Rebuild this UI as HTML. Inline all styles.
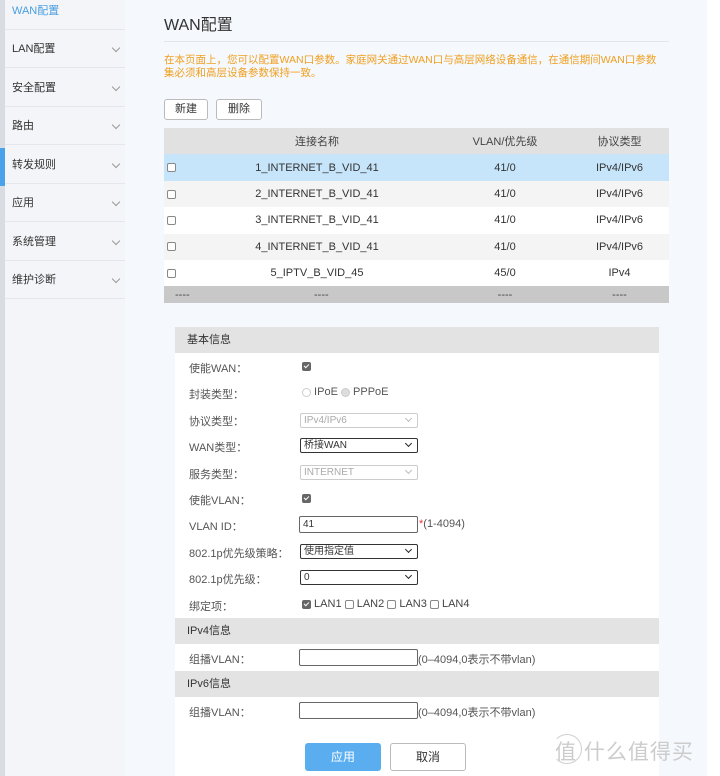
<!DOCTYPE html>
<html><head><meta charset="utf-8"><style>
*{margin:0;padding:0;box-sizing:border-box}
body{width:720px;height:776px;overflow:hidden;background:#fff;font-family:"Liberation Sans","Noto Sans CJK SC",sans-serif;font-size:11px;color:#333;position:relative}
.abs{position:absolute}
#side{left:0;top:0;width:125px;height:776px;background:#f3f5f8}
#strip{left:0;top:0;width:5px;height:776px;background:#d9dde3}
.si{position:absolute;left:5px;width:120px;height:38px;border-bottom:1px solid #e3e6ea;padding-left:7px;line-height:38px;font-size:11px;color:#333}
.si .ch{position:absolute;right:6px;top:15px;width:6px;height:6px;border-right:1px solid #999;border-bottom:1px solid #999;transform:rotate(45deg)}
#main{left:125px;top:0;width:582px;height:776px;background:#f5f8fc}
table{border-collapse:collapse;position:absolute;left:164px;top:128px;width:505px}
td{height:26.4px;text-align:center;font-size:11px}
td.c{width:16px;text-align:left;padding-left:3px}
td.p{padding-left:14px}
.cb{display:inline-block;width:9px;height:9px;border:1px solid #888;border-radius:2px;background:#fff;vertical-align:middle}
.cbk{display:inline-block;width:9px;height:9px;border-radius:2px;background:#666;vertical-align:middle;position:relative}
.cbk:after{content:"";position:absolute;left:3px;top:1px;width:2px;height:4px;border-right:1px solid #fff;border-bottom:1px solid #fff;transform:rotate(45deg)}
.btn{position:absolute;border:1px solid #bbb;border-radius:3px;background:#fff;text-align:center;font-size:11px}
#form{left:175px;top:327px;width:484px;height:449px;background:#fff}
.hd{position:absolute;left:175px;width:484px;height:26px;background:#e3e3e3;padding-left:12px;line-height:26px;font-size:11px}
.lb{position:absolute;left:189px;font-size:11px;color:#555}
.sel{position:absolute;left:300px;width:118px;height:15px;border:1px solid #333;border-radius:2px;background:#fff;font-size:10px;padding-left:3px;line-height:13px}
.sel.dis{border-color:#ccc;color:#aaa}
.sel:after{content:"";position:absolute;right:6px;top:2px;width:4px;height:4px;border-right:1.5px solid #222;border-bottom:1.5px solid #222;transform:rotate(45deg)}
.sel.dis:after{border-color:#bbb}
.inp{position:absolute;left:299px;width:119px;height:17px;border:1px solid #666;border-radius:2px;background:#fff;font-size:10px;padding-left:3px;line-height:15px}
</style></head><body>
<div id="side" class="abs"></div>
<div id="strip" class="abs"></div>
<div class="abs" style="left:0;top:148px;width:5px;height:38px;background:#4aa3ea"></div>
<div class="si" style="top:-8px;color:#4a9de0">WAN配置</div>
<div class="si" style="top:30px">LAN配置<span class="ch"></span></div>
<div class="si" style="top:69px">安全配置<span class="ch"></span></div>
<div class="si" style="top:107px">路由<span class="ch"></span></div>
<div class="si" style="top:146px">转发规则<span class="ch"></span></div>
<div class="si" style="top:184px">应用<span class="ch"></span></div>
<div class="si" style="top:223px">系统管理<span class="ch"></span></div>
<div class="si" style="top:261px">维护诊断<span class="ch"></span></div>
<div id="main" class="abs"></div>
<div class="abs" style="left:164px;top:11px;font-size:16px;color:#333">WAN配置</div>
<div class="abs" style="left:164px;top:41px;width:505px;height:1px;background:#e3e6ea"></div>
<div class="abs" style="left:164px;top:54px;width:500px;font-size:10.5px;line-height:13px;color:#f0a020">在本页面上，您可以配置WAN口参数。家庭网关通过WAN口与高层网络设备通信，在通信期间WAN口参数<br>集必须和高层设备参数保持一致。</div>
<div class="btn" style="left:164px;top:99px;width:44px;height:21px;line-height:19px">新建</div>
<div class="btn" style="left:216px;top:99px;width:46px;height:21px;line-height:19px">删除</div>
<table>
<tr style="background:#e1e1e1;color:#444"><td class="c"></td><td style="width:274px">连接名称</td><td style="width:102px">VLAN/优先级</td><td class="p">协议类型</td></tr>
<tr style="background:#c6e5fa"><td class="c"><span class="cb"></span></td><td>1_INTERNET_B_VID_41</td><td>41/0</td><td class="p">IPv4/IPv6</td></tr>
<tr style="background:#f4f4f4"><td class="c"><span class="cb"></span></td><td>2_INTERNET_B_VID_41</td><td>41/0</td><td class="p">IPv4/IPv6</td></tr>
<tr style="background:#fff"><td class="c"><span class="cb"></span></td><td>3_INTERNET_B_VID_41</td><td>41/0</td><td class="p">IPv4/IPv6</td></tr>
<tr style="background:#f4f4f4"><td class="c"><span class="cb"></span></td><td>4_INTERNET_B_VID_41</td><td>41/0</td><td class="p">IPv4/IPv6</td></tr>
<tr style="background:#fff"><td class="c"><span class="cb"></span></td><td>5_IPTV_B_VID_45</td><td>45/0</td><td class="p">IPv4</td></tr>
<tr style="background:#c8c8c8;color:#444"><td colspan="2" style="height:17px;text-align:left;padding-left:11px;position:relative">----<span style="position:absolute;left:150px">----</span></td><td style="height:17px">----</td><td class="p" style="height:17px">----</td></tr>
</table>
<div id="form" class="abs"></div>
<div class="hd" style="top:327px">基本信息</div>
<div class="lb" style="top:360px">使能WAN：</div><span class="cbk" style="position:absolute;left:302px;top:362px"></span>
<div class="lb" style="top:386px">封装类型：</div>
<div class="abs" style="left:302px;top:386px;color:#555"><span class="cb" style="border-radius:50%;border-color:#ccc"></span> IPoE <span class="cb" style="border-radius:50%;border-color:#ccc;background:#ddd"></span> PPPoE</div>
<div class="lb" style="top:413px">协议类型：</div><div class="sel dis" style="top:413px">IPv4/IPv6</div>
<div class="lb" style="top:439px">WAN类型：</div><div class="sel" style="top:438px">桥接WAN</div>
<div class="lb" style="top:466px">服务类型：</div><div class="sel dis" style="top:465px">INTERNET</div>
<div class="lb" style="top:492px">使能VLAN：</div><span class="cbk" style="position:absolute;left:302px;top:494px"></span>
<div class="lb" style="top:518px">VLAN ID：</div><div class="inp" style="top:516px">41</div>
<div class="abs" style="left:419px;top:518px;color:#555"><span style="color:#e33">*</span>(1-4094)</div>
<div class="lb" style="top:545px">802.1p优先级策略：</div><div class="sel" style="top:544px">使用指定值</div>
<div class="lb" style="top:571px">802.1p优先级：</div><div class="sel" style="top:570px">0</div>
<div class="lb" style="top:598px">绑定项：</div>
<div class="abs" style="left:302px;top:598px;color:#444"><span class="cbk"></span> LAN1 <span class="cb"></span> LAN2 <span class="cb"></span> LAN3 <span class="cb"></span> LAN4</div>
<div class="hd" style="top:618px">IPv4信息</div>
<div class="lb" style="top:651px">组播VLAN：</div><div class="inp" style="top:649px"></div>
<div class="abs" style="left:418px;top:651px;color:#555">(0–4094,0表示不带vlan)</div>
<div class="hd" style="top:671px">IPv6信息</div>
<div class="lb" style="top:704px">组播VLAN：</div><div class="inp" style="top:702px"></div>
<div class="abs" style="left:418px;top:704px;color:#555">(0–4094,0表示不带vlan)</div>
<div class="abs" style="left:305px;top:743px;width:76px;height:28px;background:#5aaef0;border-radius:3px;color:#fff;text-align:center;line-height:28px;font-size:12px">应用</div>
<div class="btn" style="left:390px;top:743px;width:76px;height:28px;line-height:26px;font-size:12px">取消</div>
<div class="abs" style="left:552px;top:734px;width:30px;height:30px;border:1.5px solid #d0d0d0;border-radius:50%;border-left-color:transparent"></div>
<div class="abs" style="left:555px;top:736px;font-size:21px;color:#ccc;letter-spacing:1px">值 什么值得买</div>
</body></html>
